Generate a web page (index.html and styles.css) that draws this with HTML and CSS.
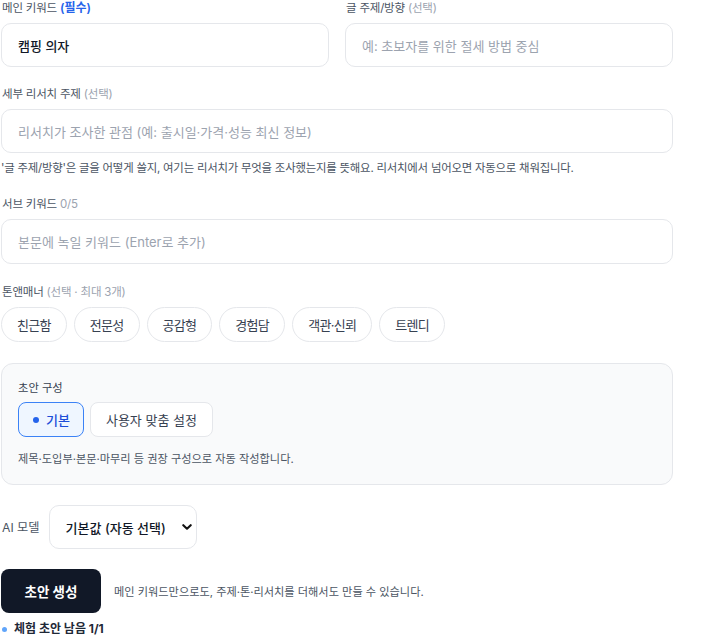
FILE: index.html
```html
<!DOCTYPE html>
<html lang="ko">
<head>
<meta charset="utf-8">
<title>초안 생성</title>
<link rel="stylesheet" href="styles.css">
</head>
<body>
<div class="page">
  <div class="row2">
    <div class="field">
      <div class="label">메인 키워드 <span class="req">(필수)</span></div>
      <div class="input filled">캠핑 의자</div>
    </div>
    <div class="field">
      <div class="label">글 주제/방향 <span class="opt">(선택)</span></div>
      <div class="input">예: 초보자를 위한 절세 방법 중심</div>
    </div>
  </div>

  <div class="field sec">
    <div class="label">세부 리서치 주제 <span class="opt">(선택)</span></div>
    <div class="input">리서치가 조사한 관점 (예: 출시일·가격·성능 최신 정보)</div>
    <div class="help">'글 주제/방향'은 글을 어떻게 쓸지, 여기는 리서치가 무엇을 조사했는지를 뜻해요. 리서치에서 넘어오면 자동으로 채워집니다.</div>
  </div>

  <div class="field sec sec-after-help">
    <div class="label">서브 키워드 <span class="opt">0/5</span></div>
    <div class="input tall">본문에 녹일 키워드 (Enter로 추가)</div>
  </div>

  <div class="field sec sec-tone">
    <div class="label">톤앤매너 <span class="opt">(선택 · 최대 3개)</span></div>
    <div class="chips">
      <span class="chip">친근함</span>
      <span class="chip">전문성</span>
      <span class="chip">공감형</span>
      <span class="chip">경험담</span>
      <span class="chip">객관·신뢰</span>
      <span class="chip">트렌디</span>
    </div>
  </div>

  <div class="panel">
    <div class="plabel">초안 구성</div>
    <div class="seg">
      <span class="segbtn active"><span class="dot"></span>기본</span>
      <span class="segbtn">사용자 맞춤 설정</span>
    </div>
    <div class="pdesc">제목·도입부·본문·마무리 등 권장 구성으로 자동 작성합니다.</div>
  </div>

  <div class="model">
    <span class="mlabel">AI 모델</span>
    <div class="select">
      <span>기본값 (자동 선택)</span>
      <svg width="10" height="10" viewBox="0 0 10 10"><path d="M1.3 3.2 5 6.7 8.7 3.2" fill="none" stroke="#111" stroke-width="2.1" stroke-linecap="round" stroke-linejoin="round"/></svg>
    </div>
  </div>

  <div class="action">
    <span class="gen">초안 생성</span>
    <span class="ahint">메인 키워드만으로도, 주제·톤·리서치를 더해서도 만들 수 있습니다.</span>
  </div>
  <div class="trial"><span class="tdot"></span>체험 초안 남음 1/1</div>
</div>
</body>
</html>
```

FILE: styles.css
```css
* { box-sizing: border-box; }
html, body { margin: 0; padding: 0; background: #fff; }
body {
  font-family: "Inter", "Noto Sans CJK KR", "Noto Sans", sans-serif;
  color: #111827;
}
.page {
  width: 673px;
  padding-left: 1px;
  display: flex;
  flex-direction: column;
}
.row2 {
  display: grid;
  grid-template-columns: 1fr 1fr;
  gap: 16px;
}
.field { display: flex; flex-direction: column; }
.sec { margin-top: 19px; }
.sec-after-help { margin-top: 20px; }
.sec-tone { margin-top: 20px; }
.label {
  font-size: 11.5px;
  line-height: 16px;
  color: #4b5563;
  margin-bottom: 7px;
  padding-left: 1px;
  letter-spacing: -0.2px;
}
.req { color: #2563eb; font-weight: 600; font-size: 12px; letter-spacing: 0; }
.opt { color: #9ca3af; }
.input {
  height: 44px;
  border: 1px solid #e5e7eb;
  border-radius: 10px;
  padding: 0 16px;
  display: flex;
  align-items: center;
  font-size: 13px;
  color: #9ca3af;
  background: #fff;
}
.input.tall { height: 45px; }
.input.filled { color: #111827; font-weight: 500; }
.help {
  margin-top: 7px;
  font-size: 11.4px;
  line-height: 16px;
  color: #4b5563;
  white-space: nowrap;
  letter-spacing: -0.2px;
}
.chips { display: flex; gap: 7px; }
.chip {
  height: 35px;
  padding: 0 15px;
  border: 1px solid #e5e7eb;
  border-radius: 18px;
  display: flex;
  align-items: center;
  font-size: 13px;
  letter-spacing: -0.7px;
  color: #374151;
  background: #fff;
}
.panel {
  margin-top: 21px;
  background: #f9fafb;
  border: 1px solid #e5e7eb;
  border-radius: 12px;
  padding: 16px 16px 17px;
}
.plabel { font-size: 11.3px; line-height: 16px; color: #374151; margin-bottom: 6px; }
.seg { display: flex; gap: 6px; }
.segbtn {
  height: 35px;
  padding: 0 15px;
  border: 1px solid #e5e7eb;
  border-radius: 8px;
  background: #fff;
  display: flex;
  align-items: center;
  font-size: 13px;
  color: #374151;
}
.segbtn.active {
  border-color: #3b82f6;
  background: #eff6ff;
  color: #1d4ed8;
  font-weight: 500;
  padding: 0 13px 0 14px;
}
.dot {
  width: 6px; height: 6px; border-radius: 50%;
  background: #2563eb;
  margin-right: 7px;
}
.pdesc { margin-top: 14px; font-size: 11.2px; line-height: 16px; color: #4b5563; }
.model {
  margin-top: 20px;
  display: flex;
  align-items: center;
  gap: 9px;
}
.mlabel { font-size: 12.2px; color: #4b5563; padding-left: 1px; }
.select {
  width: 148px;
  height: 44px;
  border: 1px solid #e5e7eb;
  border-radius: 10px;
  display: flex;
  align-items: center;
  justify-content: space-between;
  padding: 0 4px 0 16px;
  font-size: 13px;
  color: #111827;
  font-weight: 500;
}
.action {
  margin-top: 20px;
  display: flex;
  align-items: center;
  gap: 13px;
}
.gen {
  width: 100px;
  height: 44px;
  background: #111827;
  color: #fff;
  border-radius: 8px;
  display: flex;
  align-items: center;
  justify-content: center;
  font-size: 13.5px;
  font-weight: 700;
}
.ahint { font-size: 11.2px; color: #4b5563; }
.trial {
  margin-top: 8px;
  display: flex;
  align-items: center;
  font-size: 12px;
  font-weight: 700;
  color: #1f2937;
  line-height: 16px;
}
.tdot {
  width: 5px; height: 5px; border-radius: 50%;
  background: #60a5fa;
  margin: 0 7px 0 1px;
}
```
